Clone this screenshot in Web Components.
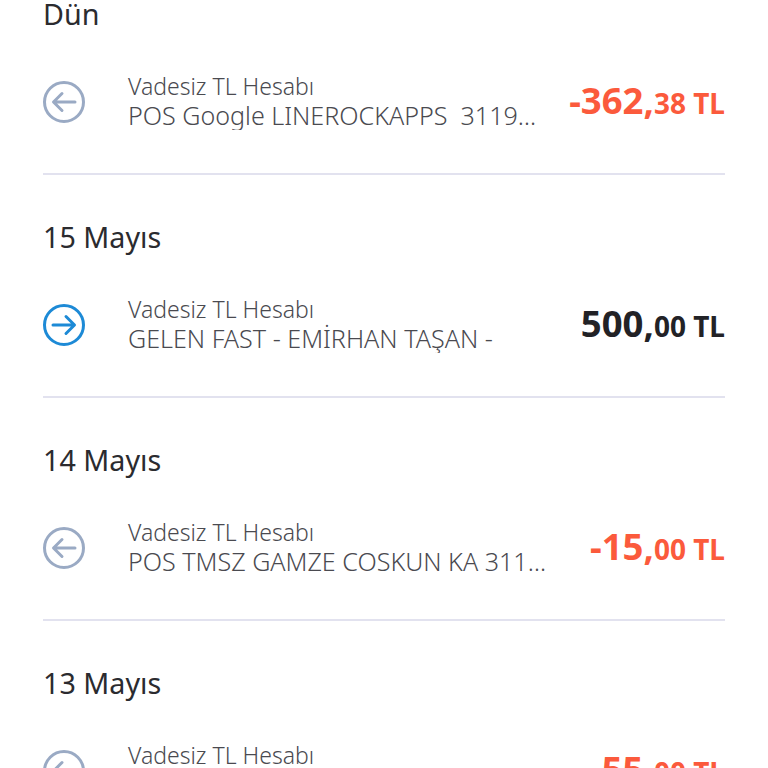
<!DOCTYPE html>
<html lang="tr">
<head>
<meta charset="utf-8">
<title>Hesap Hareketleri</title>
<style>
  html, body { margin: 0; height: 100%; overflow: hidden; background: #fff; }
  body { font-family: "Noto Sans", "Open Sans", sans-serif; }
</style>
</head>
<body>
<tx-list>
  <tx-day label="Dün">
    <tx-row dir="out" account="Vadesiz TL Hesabı" desc="POS Google LINEROCKAPPS  3119482607 TR" whole="-362" cents="38"></tx-row>
  </tx-day>
  <tx-day label="15 Mayıs">
    <tx-row dir="in" account="Vadesiz TL Hesabı" desc="GELEN FAST - EMİRHAN TAŞAN -" whole="500" cents="00"></tx-row>
  </tx-day>
  <tx-day label="14 Mayıs">
    <tx-row dir="out" account="Vadesiz TL Hesabı" desc="POS TMSZ GAMZE COSKUN KA 3118204 ISTANBUL" whole="-15" cents="00"></tx-row>
  </tx-day>
  <tx-day label="13 Mayıs">
    <tx-row dir="out" account="Vadesiz TL Hesabı" desc="POS TMSZ GAMZE COSKUN KA 3117206 ISTANBUL" whole="-55" cents="00"></tx-row>
  </tx-day>
</tx-list>

<script>
class TxList extends HTMLElement {
  constructor() {
    super();
    this.attachShadow({ mode: "open" });
    this.shadowRoot.innerHTML = `
      <style>
        :host { display: block; height: 768px; overflow: hidden; }
        .inner { margin-top: -48px; padding: 0 43px; }
      </style>
      <div class="inner"><slot></slot></div>
    `;
  }
}

class TxDay extends HTMLElement {
  constructor() {
    super();
    this.attachShadow({ mode: "open" });
    this.shadowRoot.innerHTML = `
      <style>
        :host { display: block; padding-top: 43px; }
        .label { font-size: 28.7px; line-height: 38px; color: #2b2b2f; margin-bottom: 38px; }
        .line { height: 2px; background: #e2e2ef; margin-top: 42px; }
      </style>
      <div class="label"></div>
      <slot></slot>
      <div class="line"></div>
    `;
  }
  connectedCallback() {
    this.shadowRoot.querySelector(".label").textContent = this.getAttribute("label");
  }
}

class TxRow extends HTMLElement {
  constructor() {
    super();
    this.attachShadow({ mode: "open" });
    this.shadowRoot.innerHTML = `
      <style>
        :host { display: flex; align-items: center; height: 60px; }
        svg { width: 44px; height: 44px; flex: none; margin: 2px 42px 0 -1px; }
        .text { flex: 1; min-width: 0; color: #4a4a50; font-weight: 300; padding-right: 30px; }
        .account { font-size: 23px; line-height: 29px; }
        .desc { font-size: 25.1px; line-height: 30px; margin-top: -1px; white-space: pre; overflow: hidden; text-overflow: ellipsis; }
        .amount { flex: none; font-weight: 700; font-size: 36.5px; line-height: 40px; margin-top: 1px; white-space: nowrap; }
        .amount small { font-size: 28px; }
        :host([dir="out"]) .amount { color: #fb5a3c; }
        :host([dir="in"]) .amount { color: #222226; }
      </style>
      <svg viewBox="0 0 44 44" fill="none" stroke-linecap="round" stroke-linejoin="round"></svg>
      <div class="text">
        <div class="account"></div>
        <div class="desc"></div>
      </div>
      <div class="amount"><span class="whole"></span><small class="rest"></small></div>
    `;
  }
  connectedCallback() {
    const out = this.getAttribute("dir") === "out";
    const color = out ? "#9aaac4" : "#1d8ad6";
    const arrow = out ? "M33 22H12M20 13.5L11.5 22L20 30.5" : "M11 22H32M24 13.5L32.5 22L24 30.5";
    this.shadowRoot.querySelector("svg").innerHTML =
      `<circle cx="22" cy="22" r="19.5" stroke="${color}" stroke-width="3"/>` +
      `<path d="${arrow}" stroke="${color}" stroke-width="3"/>`;
    this.shadowRoot.querySelector(".account").textContent = this.getAttribute("account");
    this.shadowRoot.querySelector(".desc").textContent = this.getAttribute("desc");
    this.shadowRoot.querySelector(".whole").textContent = this.getAttribute("whole") + ",";
    this.shadowRoot.querySelector(".rest").textContent = this.getAttribute("cents") + " TL";
  }
}

customElements.define("tx-list", TxList);
customElements.define("tx-day", TxDay);
customElements.define("tx-row", TxRow);
</script>
</body>
</html>
